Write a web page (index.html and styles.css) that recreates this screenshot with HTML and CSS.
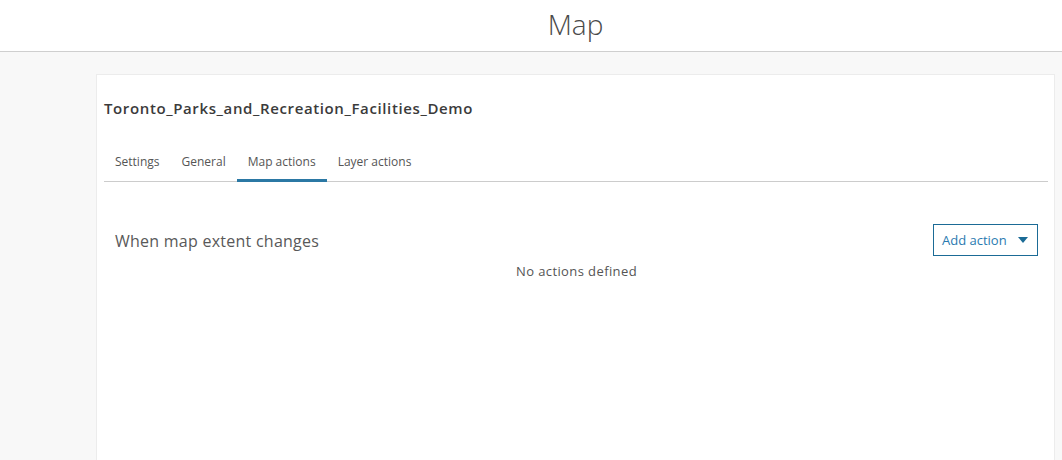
FILE: index.html
```html
<!DOCTYPE html>
<html>
<head>
<meta charset="utf-8">
<link rel="stylesheet" href="styles.css">
</head>
<body>
<header class="topbar">
  <div class="topbar-inner"><h1 class="page-title">Map</h1></div>
</header>
<main class="stage">
  <section class="card">
    <h2 class="card-title">Toronto_Parks_and_Recreation_Facilities_Demo</h2>
    <nav class="tabs">
      <span class="tab">Settings</span>
      <span class="tab">General</span>
      <span class="tab active">Map actions</span>
      <span class="tab">Layer actions</span>
    </nav>
    <div class="section">
      <div class="section-head">
        <span class="section-title">When map extent changes</span>
        <button class="add-btn">Add action <svg class="caret" width="10" height="6" viewBox="0 0 10 6"><path d="M0 0h10L5 6z" fill="#1b6b96"/></svg></button>
      </div>
      <p class="empty">No actions defined</p>
    </div>
  </section>
</main>
</body>
</html>
```
FILE: styles.css
```css
html, body {
  margin: 0;
  padding: 0;
  height: 100%;
}
body {
  background: #f8f8f8;
  font-family: "Open Sans", Lato, sans-serif;
  color: #4c4c4c;
  overflow: hidden;
}
.topbar {
  background: #fff;
  height: 51px;
  border-bottom: 1px solid #cfcfcf;
}
.topbar-inner {
  margin-left: 96px;
  width: 959px;
  text-align: center;
}
.page-title {
  margin: 0;
  font-size: 28px;
  font-weight: 300;
  line-height: 48px;
  color: #4a4a4a;
}
.stage {
  padding: 22px 7px 0 96px;
}
.card {
  background: #fff;
  border: 1px solid #ececec;
  border-bottom: none;
  height: 385px;
  padding: 0 6px 0 7px;
}
.card-title {
  margin: 0;
  padding-top: 23px;
  font-size: 15px;
  font-weight: 600;
  line-height: 20px;
  letter-spacing: 0.62px;
  color: #3b3b3b;
}
.tabs {
  display: flex;
  margin-top: 30px;
  border-bottom: 1px solid #cccccc;
}
.tab {
  padding: 6px 11px 10px;
  font-size: 12px;
  line-height: 16px;
  color: #555;
  border-bottom: 2px solid transparent;
  margin-bottom: -1px;
}
.tab.active {
  border-bottom: 3px solid #2b78a4;
  padding-bottom: 9px;
}
.section {
  padding: 42px 10px 0 11px;
}
.section-head {
  display: flex;
  justify-content: space-between;
  align-items: center;
}
.section-title {
  font-size: 16px;
  letter-spacing: 0.25px;
  color: #595959;
  padding-top: 2px;
}
.add-btn {
  display: flex;
  align-items: center;
  height: 32px;
  width: 105px;
  padding: 0 9px 0 8px;
  border: 1px solid #1b6b96;
  background: #fff;
  color: #2a7ab0;
  font-family: inherit;
  font-size: 13px;
}
.caret {
  margin-left: auto;
}
.empty {
  margin: 6px 0 0;
  text-align: center;
  font-size: 13px;
  line-height: 18px;
  letter-spacing: 0.4px;
  color: #555;
}
```
